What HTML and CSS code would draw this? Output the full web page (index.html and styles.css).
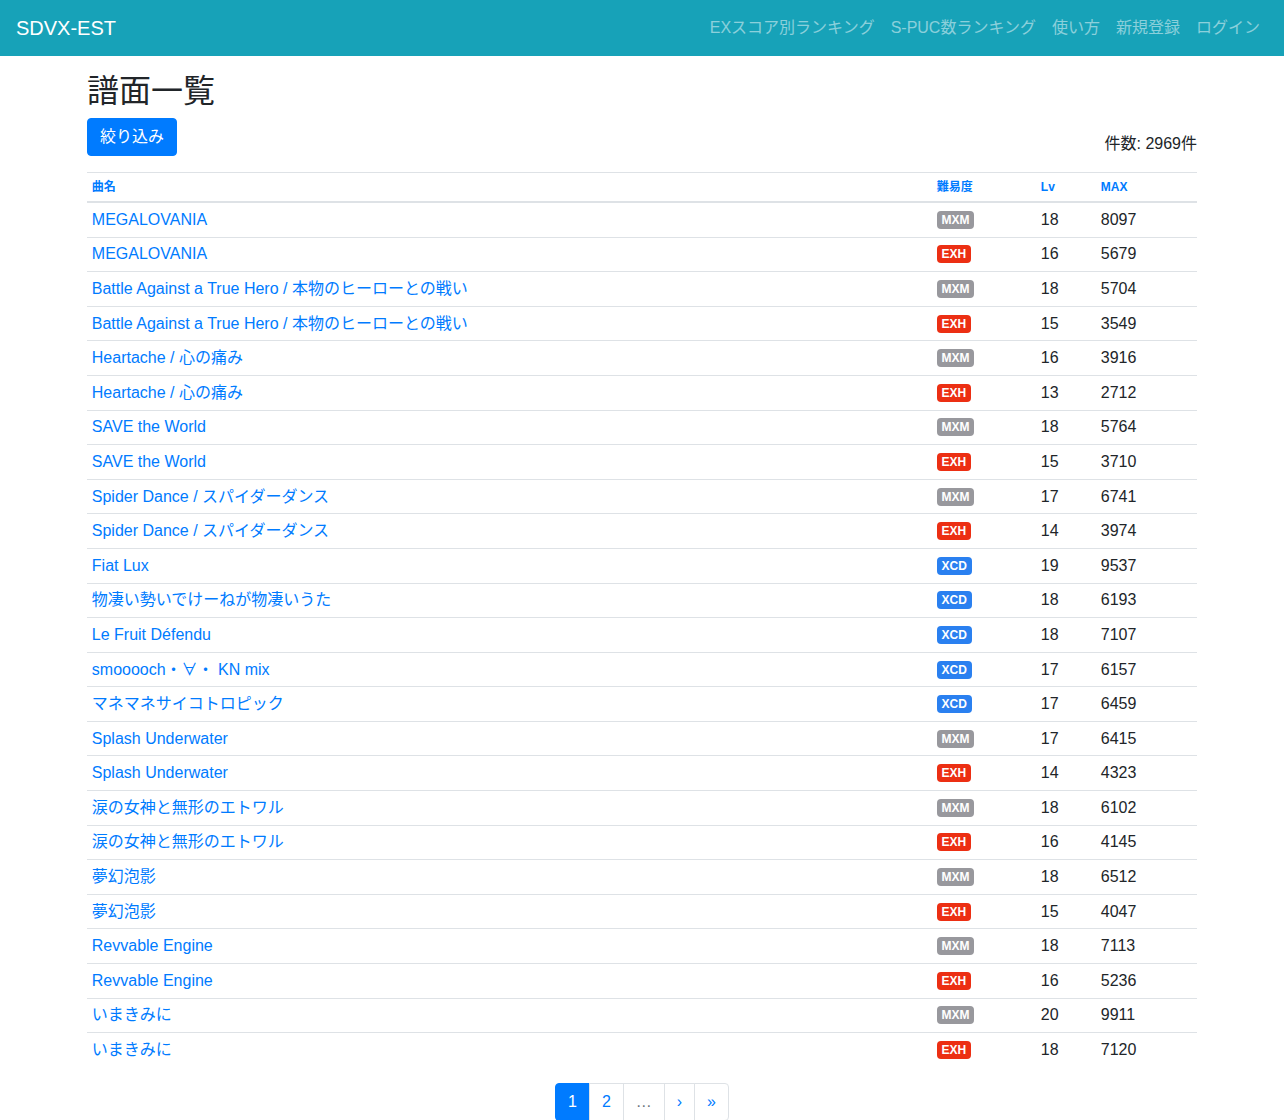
FILE: index.html
```html
<!DOCTYPE html>
<html lang="ja">
<head>
<meta charset="utf-8">
<title>SDVX-EST</title>
<link rel="stylesheet" href="styles.css">
</head>
<body>
<nav class="navbar">
  <a class="brand" href="#">SDVX-EST</a>
  <ul class="nav">
    <li><a href="#">EXスコア別ランキング</a></li>
    <li><a href="#">S-PUC数ランキング</a></li>
    <li><a href="#">使い方</a></li>
    <li><a href="#">新規登録</a></li>
    <li><a href="#">ログイン</a></li>
  </ul>
</nav>
<main class="container">
  <h2 class="title">譜面一覧</h2>
  <div class="toolbar">
    <button class="btn">絞り込み</button>
    <div class="count">件数: 2969件</div>
  </div>
  <table class="table">
    <thead>
      <tr><th class="c-name"><a href="#">曲名</a></th><th class="c-diff"><a href="#">難易度</a></th><th class="c-lv"><a href="#">Lv</a></th><th class="c-max"><a href="#">MAX</a></th></tr>
    </thead>
    <tbody>
      <tr><td><a href="#">MEGALOVANIA</a></td><td><span class="badge mxm">MXM</span></td><td>18</td><td>8097</td></tr>
      <tr><td><a href="#">MEGALOVANIA</a></td><td><span class="badge exh">EXH</span></td><td>16</td><td>5679</td></tr>
      <tr><td><a href="#">Battle Against a True Hero / 本物のヒーローとの戦い</a></td><td><span class="badge mxm">MXM</span></td><td>18</td><td>5704</td></tr>
      <tr><td><a href="#">Battle Against a True Hero / 本物のヒーローとの戦い</a></td><td><span class="badge exh">EXH</span></td><td>15</td><td>3549</td></tr>
      <tr><td><a href="#">Heartache / 心の痛み</a></td><td><span class="badge mxm">MXM</span></td><td>16</td><td>3916</td></tr>
      <tr><td><a href="#">Heartache / 心の痛み</a></td><td><span class="badge exh">EXH</span></td><td>13</td><td>2712</td></tr>
      <tr><td><a href="#">SAVE the World</a></td><td><span class="badge mxm">MXM</span></td><td>18</td><td>5764</td></tr>
      <tr><td><a href="#">SAVE the World</a></td><td><span class="badge exh">EXH</span></td><td>15</td><td>3710</td></tr>
      <tr><td><a href="#">Spider Dance / スパイダーダンス</a></td><td><span class="badge mxm">MXM</span></td><td>17</td><td>6741</td></tr>
      <tr><td><a href="#">Spider Dance / スパイダーダンス</a></td><td><span class="badge exh">EXH</span></td><td>14</td><td>3974</td></tr>
      <tr><td><a href="#">Fiat Lux</a></td><td><span class="badge xcd">XCD</span></td><td>19</td><td>9537</td></tr>
      <tr><td><a href="#">物凄い勢いでけーねが物凄いうた</a></td><td><span class="badge xcd">XCD</span></td><td>18</td><td>6193</td></tr>
      <tr><td><a href="#">Le Fruit Défendu</a></td><td><span class="badge xcd">XCD</span></td><td>18</td><td>7107</td></tr>
      <tr><td><a href="#">smooooch・∀・ KN mix</a></td><td><span class="badge xcd">XCD</span></td><td>17</td><td>6157</td></tr>
      <tr><td><a href="#">マネマネサイコトロピック</a></td><td><span class="badge xcd">XCD</span></td><td>17</td><td>6459</td></tr>
      <tr><td><a href="#">Splash Underwater</a></td><td><span class="badge mxm">MXM</span></td><td>17</td><td>6415</td></tr>
      <tr><td><a href="#">Splash Underwater</a></td><td><span class="badge exh">EXH</span></td><td>14</td><td>4323</td></tr>
      <tr><td><a href="#">涙の女神と無形のエトワル</a></td><td><span class="badge mxm">MXM</span></td><td>18</td><td>6102</td></tr>
      <tr><td><a href="#">涙の女神と無形のエトワル</a></td><td><span class="badge exh">EXH</span></td><td>16</td><td>4145</td></tr>
      <tr><td><a href="#">夢幻泡影</a></td><td><span class="badge mxm">MXM</span></td><td>18</td><td>6512</td></tr>
      <tr><td><a href="#">夢幻泡影</a></td><td><span class="badge exh">EXH</span></td><td>15</td><td>4047</td></tr>
      <tr><td><a href="#">Revvable Engine</a></td><td><span class="badge mxm">MXM</span></td><td>18</td><td>7113</td></tr>
      <tr><td><a href="#">Revvable Engine</a></td><td><span class="badge exh">EXH</span></td><td>16</td><td>5236</td></tr>
      <tr><td><a href="#">いまきみに</a></td><td><span class="badge mxm">MXM</span></td><td>20</td><td>9911</td></tr>
      <tr><td><a href="#">いまきみに</a></td><td><span class="badge exh">EXH</span></td><td>18</td><td>7120</td></tr>
    </tbody>
  </table>
  <ul class="pagination">
    <li class="page active"><a href="#">1</a></li>
    <li class="page"><a href="#">2</a></li>
    <li class="page disabled"><a href="#">…</a></li>
    <li class="page"><a href="#">›</a></li>
    <li class="page"><a href="#">»</a></li>
  </ul>
</main>
</body>
</html>
```

FILE: styles.css
```css
* { box-sizing: border-box; }
html, body { margin: 0; padding: 0; }
body {
  font-family: "Liberation Sans", Arial, "Noto Sans CJK JP", sans-serif;
  font-size: 16px;
  line-height: 1.5;
  color: #212529;
  background: #fff;
}
a { color: #007bff; text-decoration: none; }

.navbar {
  display: flex;
  align-items: center;
  justify-content: space-between;
  height: 56px;
  padding: 8px 16px;
  background: #17a2b8;
}
.brand {
  color: #fff;
  font-size: 20px;
  line-height: 30px;
  padding: 5px 0;
}
.nav {
  display: flex;
  list-style: none;
  margin: 0;
  padding: 0;
}
.nav a {
  display: block;
  padding: 8px 8px;
  color: rgba(255,255,255,0.5);
  line-height: 24px;
}

.container {
  width: 1140px;
  margin: 0 auto;
  padding: 0 15px;
}
.title {
  font-size: 32px;
  font-weight: 400;
  line-height: 1.2;
  margin: 16px 0 8px;
}
.toolbar {
  display: flex;
  justify-content: space-between;
  align-items: flex-end;
  margin-bottom: 16px;
}
.btn {
  font-family: inherit;
  font-size: 16px;
  line-height: 1.5;
  padding: 6px 12px;
  color: #fff;
  background: #007bff;
  border: 1px solid #007bff;
  border-radius: 4px;
}
.count { line-height: 24px; }

.table {
  width: 100%;
  border-collapse: collapse;
  margin-bottom: 16px;
}
.table th, .table td {
  padding: 4.8px;
  border-top: 1px solid #dee2e6;
  text-align: left;
  vertical-align: top;
}
.table th {
  font-size: 12px;
  font-weight: 700;
  line-height: 18px;
  border-bottom: 2px solid #dee2e6;
  vertical-align: bottom;
}
.c-diff { width: 104px; }
.c-lv { width: 60px; }
.c-max { width: 101px; }

.badge {
  display: inline-block;
  padding: 3px 4.8px;
  font-size: 12px;
  font-weight: 700;
  line-height: 1;
  color: #fff;
  border-radius: 4px;
  vertical-align: 1px;
}
.mxm { background: #98989d; }
.exh { background: #ec2f13; }
.xcd { background: #2a80f0; }

.pagination {
  display: flex;
  justify-content: center;
  list-style: none;
  padding: 0;
  margin: 0;
}
.page a {
  display: block;
  padding: 8px 12px;
  line-height: 20px;
  border: 1px solid #dee2e6;
  margin-left: -1px;
  background: #fff;
  color: #007bff;
}
.page:first-child a { border-radius: 4px 0 0 4px; margin-left: 0; }
.page:last-child a { border-radius: 0 4px 4px 0; }
.page.active a { background: #007bff; border-color: #007bff; color: #fff; }
.page.disabled a { color: #6c757d; }
```
